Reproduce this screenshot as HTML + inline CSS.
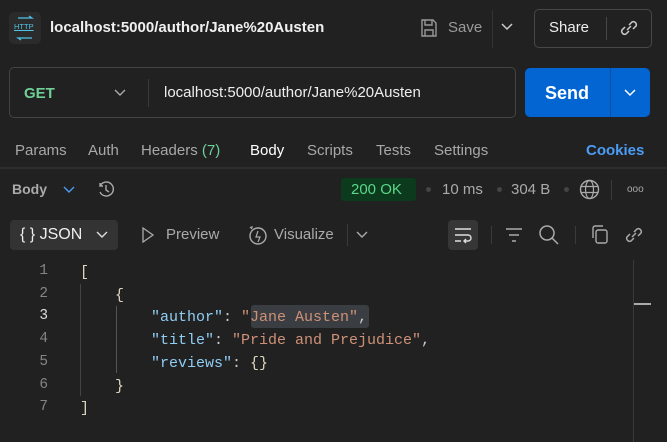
<!DOCTYPE html>
<html><head><style>
*{margin:0;padding:0;box-sizing:border-box}
body{width:667px;height:442px;background:#212121;font-family:"Liberation Sans",sans-serif;color:#e6e6e6;position:relative;overflow:hidden}
.a{position:absolute;white-space:nowrap}
.t{font-size:15px;color:#a8a8a8;top:142px}
.code{font-family:"Liberation Mono",monospace;font-size:15px;line-height:22.7px}
.k{color:#8fcdf5}.s{color:#ce9178}.p{color:#cccccc}.b{color:#dcd6bf}
.ln{left:28px;width:20px;text-align:right;color:#858585;font-family:"Liberation Mono",monospace;font-size:14.4px}
svg{position:absolute}
</style></head><body>
<!-- header -->
<div class="a" style="left:9px;top:12px;width:32px;height:32px;background:#2b2b2b;border-radius:5px"></div>
<div class="a" style="left:14px;top:22px;font-size:7.5px;color:#4fc3e8;text-decoration:underline">HTTP</div>
<svg style="left:14px;top:14px" width="22" height="28"><path d="M4 4h14l-3-2M18 24H4l3 2" stroke="#4fc3e8" stroke-width="1.2" fill="none"/></svg>
<div class="a" style="left:50px;top:19px;font-size:15px;font-weight:bold;color:#f0f0f0">localhost:5000/author/Jane%20Austen</div>
<svg style="left:420px;top:18px" width="18" height="20"><path d="M2 2h11l3 3v13H2z M5 2v5h7V2 M5 18v-6h8v6" stroke="#999" stroke-width="1.4" fill="none"/></svg>
<div class="a" style="left:448px;top:19px;font-size:15px;color:#9a9a9a">Save</div>
<div class="a" style="left:492px;top:10px;width:1px;height:38px;background:#333"></div>
<svg style="left:501px;top:23px" width="12" height="8"><path d="M1 1l5 5 5-5" stroke="#ccc" stroke-width="1.5" fill="none"/></svg>
<div class="a" style="left:534px;top:9px;width:118px;height:39px;border:1px solid #474747;border-radius:5px"></div>
<div class="a" style="left:549px;top:19px;font-size:15px;color:#eee">Share</div>
<div class="a" style="left:606px;top:17px;width:1px;height:23px;background:#474747"></div>
<svg style="left:618px;top:17px" width="22" height="22"><path d="M9 13l4-4M7 10l-3 3a3 3 0 004 4l3-3M15 12l3-3a3 3 0 00-4-4l-3 3" stroke="#ccc" stroke-width="1.5" fill="none"/></svg>
<!-- url -->
<div class="a" style="left:9px;top:67px;width:507px;height:51px;border:1px solid #444;border-radius:5px"></div>
<div class="a" style="left:24px;top:85px;font-size:15px;font-weight:bold;color:#6fcf97">GET</div>
<svg style="left:114px;top:89px" width="12" height="8"><path d="M1 1l5 5 5-5" stroke="#aaa" stroke-width="1.4" fill="none"/></svg>
<div class="a" style="left:148px;top:79px;width:1px;height:28px;background:#3a3a3a"></div>
<div class="a" style="left:164px;top:84px;font-size:15px;color:#eee">localhost:5000/author/Jane%20Austen</div>
<div class="a" style="left:525px;top:68px;width:125px;height:49px;background:#0265d2;border-radius:5px"></div>
<div class="a" style="left:610px;top:68px;width:1px;height:49px;background:#0a4fa0"></div>
<div class="a" style="left:545px;top:83px;font-size:18px;font-weight:bold;color:#fff">Send</div>
<svg style="left:624px;top:89px" width="12" height="8"><path d="M1 1l5 5 5-5" stroke="#fff" stroke-width="1.5" fill="none"/></svg>
<!-- tabs -->
<div class="a t" style="left:15px">Params</div>
<div class="a t" style="left:88px">Auth</div>
<div class="a t" style="left:141px">Headers <span style="color:#6fcf97">(7)</span></div>
<div class="a t" style="left:250px;color:#fff">Body</div>
<div class="a t" style="left:307px">Scripts</div>
<div class="a t" style="left:376px">Tests</div>
<div class="a t" style="left:434px">Settings</div>
<div class="a t" style="left:586px;color:#4a9cf5;font-weight:bold">Cookies</div>
<div class="a" style="left:0;top:167px;width:667px;height:2px;background:#2e2e2e"></div>
<!-- response bar -->
<div class="a" style="left:12px;top:181px;font-size:14px;font-weight:bold;color:#aaa">Body</div>
<svg style="left:63px;top:186px" width="12" height="8"><path d="M1 1l5 5 5-5" stroke="#4a9cf5" stroke-width="1.4" fill="none"/></svg>
<svg style="left:95px;top:178px" width="22" height="22"><path d="M5 8a7 7 0 1 1 0 6M5 5v3h3M11 7v5l3 2" stroke="#aaa" stroke-width="1.4" fill="none"/></svg>
<div class="a" style="left:341px;top:178px;width:75px;height:23px;background:#0b3a1c;border-radius:3px"></div>
<div class="a" style="left:351px;top:181px;font-size:15px;color:#5cd68a">200 OK</div>
<div class="a" style="left:426px;top:187px;width:5px;height:5px;border-radius:50%;background:#444"></div>
<div class="a" style="left:442px;top:181px;font-size:15px;color:#aaa">10 ms</div>
<div class="a" style="left:497px;top:187px;width:5px;height:5px;border-radius:50%;background:#444"></div>
<div class="a" style="left:511px;top:181px;font-size:15px;color:#aaa">304 B</div>
<div class="a" style="left:564px;top:187px;width:5px;height:5px;border-radius:50%;background:#444"></div>
<svg style="left:579px;top:179px" width="21" height="21"><circle cx="10.5" cy="10.5" r="9" stroke="#aaa" stroke-width="1.4" fill="none"/><ellipse cx="10.5" cy="10.5" rx="4" ry="9" stroke="#aaa" stroke-width="1.2" fill="none"/><path d="M2 7.5h17M2 13.5h17" stroke="#aaa" stroke-width="1.2"/></svg>
<div class="a" style="left:611px;top:180px;width:1px;height:20px;background:#3a3a3a"></div>
<div class="a" style="left:627px;top:184px;font-size:10px;color:#aaa;letter-spacing:0px">ooo</div>
<!-- toolbar -->
<div class="a" style="left:10px;top:220px;width:108px;height:30px;background:#333;border-radius:4px"></div>
<div class="a" style="left:20px;top:226px;font-size:16px;color:#eee">{ } JSON</div>
<svg style="left:96px;top:231px" width="12" height="8"><path d="M1 1l5 5 5-5" stroke="#ddd" stroke-width="1.4" fill="none"/></svg>
<svg style="left:141px;top:226px" width="14" height="18"><path d="M2 2l10 7-10 7z" stroke="#aaa" stroke-width="1.3" fill="none"/></svg>
<div class="a" style="left:166px;top:226px;font-size:15px;color:#aaa">Preview</div>
<svg style="left:246px;top:223px" width="24" height="24"><circle cx="12" cy="13" r="8" stroke="#aaa" stroke-width="1.4" fill="none"/><path d="M12 8l-2 6h4l-2 5M4 4l2 2M6 3v2" stroke="#aaa" stroke-width="1.2" fill="none"/></svg>
<div class="a" style="left:274px;top:226px;font-size:15px;color:#aaa">Visualize</div>
<div class="a" style="left:347px;top:224px;width:1px;height:22px;background:#3a3a3a"></div>
<svg style="left:356px;top:231px" width="12" height="8"><path d="M1 1l5 5 5-5" stroke="#aaa" stroke-width="1.4" fill="none"/></svg>
<div class="a" style="left:448px;top:220px;width:30px;height:30px;background:#363636;border-radius:4px"></div>
<svg style="left:453px;top:225px" width="20" height="20"><path d="M2 4h16M2 10h13a3 3 0 010 6h-4M13 14l-2 2 2 2M2 16h6" stroke="#ddd" stroke-width="1.4" fill="none"/></svg>
<div class="a" style="left:491px;top:226px;width:1px;height:18px;background:#3a3a3a"></div>
<svg style="left:504px;top:226px" width="20" height="18"><path d="M2 3h16M5 9h10M8 15h4" stroke="#aaa" stroke-width="1.5"/></svg>
<svg style="left:538px;top:224px" width="22" height="22"><circle cx="9" cy="9" r="7" stroke="#aaa" stroke-width="1.5" fill="none"/><path d="M14 14l6 6" stroke="#aaa" stroke-width="1.5"/></svg>
<div class="a" style="left:575px;top:226px;width:1px;height:18px;background:#3a3a3a"></div>
<svg style="left:590px;top:224px" width="22" height="22"><rect x="6" y="6" width="11" height="13" rx="2" stroke="#aaa" stroke-width="1.4" fill="none"/><path d="M3 14V4a2 2 0 012-2h8" stroke="#aaa" stroke-width="1.4" fill="none"/></svg>
<svg style="left:623px;top:224px" width="22" height="22"><path d="M9 13l4-4M7 10l-3 3a3 3 0 004 4l3-3M15 12l3-3a3 3 0 00-4-4l-3 3" stroke="#aaa" stroke-width="1.5" fill="none"/></svg>
<!-- code -->
<div class="a ln" style="top:263px">1</div>
<div class="a ln" style="top:285.7px">2</div>
<div class="a ln" style="top:308.4px;color:#ddd">3</div>
<div class="a ln" style="top:331.1px">4</div>
<div class="a ln" style="top:353.8px">5</div>
<div class="a ln" style="top:376.5px">6</div>
<div class="a ln" style="top:399.2px">7</div>
<div class="a" style="left:80px;top:284px;width:1px;height:112px;background:#444"></div>
<div class="a" style="left:116px;top:306px;width:1px;height:67px;background:#555"></div>
<div class="a" style="left:251px;top:305px;width:118px;height:23px;background:#3a3d42;border-radius:3px"></div>
<div class="a code" style="left:80px;top:262px">
<div class="b">[</div>
<div style="padding-left:35px" class="b">{</div>
<div style="padding-left:71px"><span class="k">"author"</span><span class="p">: </span><span class="s">"Jane Austen"</span><span class="p">,</span></div>
<div style="padding-left:71px"><span class="k">"title"</span><span class="p">: </span><span class="s">"Pride and Prejudice"</span><span class="p">,</span></div>
<div style="padding-left:71px"><span class="k">"reviews"</span><span class="p">: </span><span class="b">{}</span></div>
<div style="padding-left:35px" class="b">}</div>
<div class="b">]</div>
</div>
<div class="a" style="left:633px;top:260px;width:1px;height:182px;background:#3a3a3a"></div>
<div class="a" style="left:634px;top:303px;width:17px;height:2px;background:#aaa"></div>
</body></html>
